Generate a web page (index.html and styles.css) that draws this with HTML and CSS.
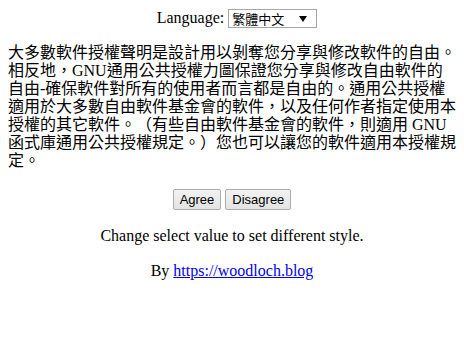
FILE: index.html
```html
<!DOCTYPE html>
<html lang="zh-Hant">
<head>
    <meta charset="UTF-8">
    <meta name="viewport" content="width=device-width, initial-scale=1.0">
    <title>License</title>
    <link rel="stylesheet" href="styles.css">
</head>
<body>
    <div class="lang-bar">
        <label for="lang">Language:</label>
        <span class="select-wrap">
            <select id="lang">
                <option>繁體中文</option>
                <option>English</option>
            </select>
        </span>
    </div>

    <p class="license">大多數軟件授權聲明是設計用以剝奪您分享與修改軟件的自由。相反地，GNU通用公共授權力圖保證您分享與修改自由軟件的自由-確保軟件對所有的使用者而言都是自由的。通用公共授權適用於大多數自由軟件基金會的軟件，以及任何作者指定使用本授權的其它軟件。（有些自由軟件基金會的軟件，則適用 GNU 函式庫通用公共授權規定。）您也可以讓您的軟件適用本授權規定。</p>

    <div class="actions">
        <button class="btn">Agree</button>
        <button class="btn">Disagree</button>
    </div>

    <p class="note">Change select value to set different style.</p>
    <p class="note">By <a href="#">https://woodloch.blog</a></p>
</body>
</html>
```

FILE: styles.css
```css
body {
    margin: 8px;
    font-family: "Liberation Serif", "Noto Sans CJK TC", serif;
    font-size: 16px;
    line-height: 18px;
    color: #000;
    background-color: #fff;
}

.lang-bar {
    display: flex;
    justify-content: center;
    align-items: center;
    gap: 4px;
    height: 20px;
    padding-left: 10px;
}

.select-wrap {
    position: relative;
    display: inline-block;
}

.select-wrap::after {
    content: "";
    position: absolute;
    right: 10px;
    top: 7px;
    border-left: 4px solid transparent;
    border-right: 4px solid transparent;
    border-top: 6px solid #000;
    pointer-events: none;
}

select {
    appearance: none;
    -webkit-appearance: none;
    width: 89px;
    height: 19px;
    padding: 0 0 0 3px;
    border: 1px solid #a6a6a6;
    border-radius: 0;
    background-color: #fff;
    font-family: "Noto Sans CJK TC", sans-serif;
    font-size: 13px;
    line-height: 17px;
    color: #000;
}

.license {
    margin: 16px 0 19px;
    text-align: left;
    text-spacing-trim: space-all;
}

.actions {
    display: flex;
    justify-content: center;
    gap: 4px;
    margin-bottom: 2px;
}

.btn {
    height: 21px;
    padding: 0 6px;
    border: 1px solid #adadad;
    border-radius: 2px;
    background: linear-gradient(#f2f2f2, #e3e3e3);
    font-family: "Liberation Sans", Arial, sans-serif;
    font-size: 13px;
    color: #000;
}

.note {
    margin: 17px 0;
    text-align: center;
}

.note a {
    color: #0000ee;
}
```
